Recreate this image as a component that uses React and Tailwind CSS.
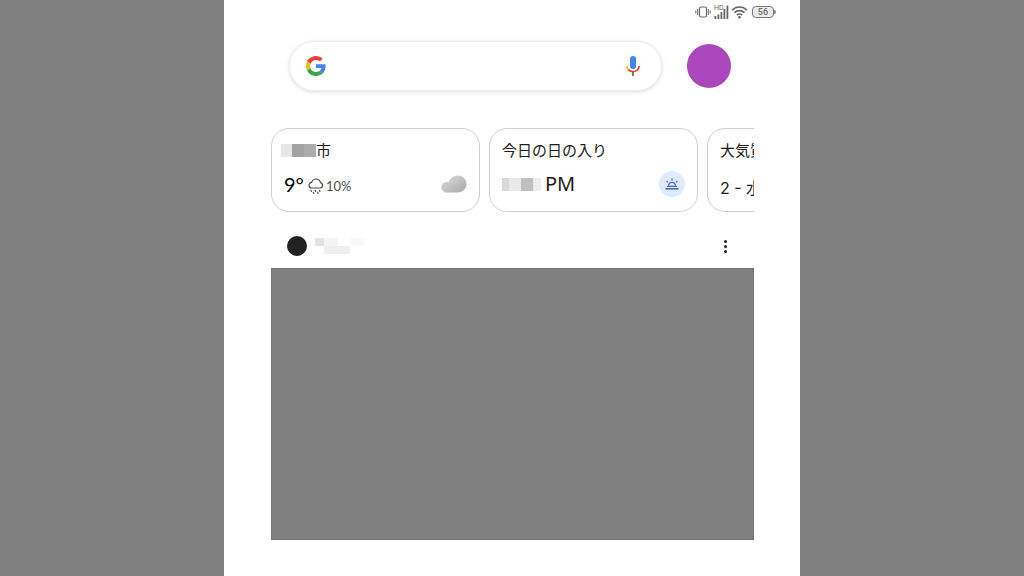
import React, { useState } from 'react';

function StatusBar() {
  return (
    <div className="flex h-6 items-center justify-end pr-6 text-[#666666]">
      <svg width="16" height="12" viewBox="0 0 16 12" fill="none" stroke="currentColor" aria-hidden="true">
        <rect x="4.5" y="1" width="7" height="10" rx="1.5" strokeWidth="1.2" />
        <path d="M2.7 3v6M0.8 4.5v3M13.3 3v6M15.2 4.5v3" strokeWidth="1" />
      </svg>
      <div className="relative mr-px ml-[3px] h-4 w-4">
        <span className="absolute top-0 left-0 font-['Roboto',sans-serif] text-[7px] leading-[8px]">HD</span>
        <svg className="absolute bottom-0 left-0" width="16" height="15" viewBox="0 0 16 15" fill="none" stroke="currentColor" strokeWidth="1.8" aria-hidden="true">
          <path d="M1.4 14v-3M4.4 14V9.5M7.4 14V7M10.4 14V4M13.4 14V0.5" />
        </svg>
      </div>
      <svg width="17" height="14" viewBox="0 0 17 14" fill="none" stroke="currentColor" strokeWidth="1.6" aria-hidden="true">
        <path d="M1 5.2C5.3 1 11.7 1 16 5.2M3.5 7.7c2.9-2.8 7.1-2.8 10 0M5.9 10.1c1.5-1.5 3.7-1.5 5.2 0" />
        <circle cx="8.5" cy="12.2" r="1.3" fill="currentColor" stroke="none" />
      </svg>
      <div className="ml-1 flex items-center">
        <span className="flex h-3 w-[22px] items-center justify-center rounded border border-[#777777] bg-[#eeeeee] font-['Roboto',sans-serif] text-[9px] leading-[10px] font-medium tracking-wide">
          56
        </span>
        <span className="h-1 w-0.5 rounded-r bg-[#888888]"></span>
      </div>
    </div>
  );
}

function GoogleLogo() {
  return (
    <svg className="shrink-0" width="20" height="20" viewBox="0 0 48 48" aria-hidden="true">
      <path fill="#EA4335" d="M24 9.5c3.54 0 6.71 1.22 9.21 3.6l6.85-6.85C35.9 2.38 30.47 0 24 0 14.62 0 6.51 5.38 2.56 13.22l7.98 6.19C12.43 13.72 17.74 9.5 24 9.5z" />
      <path fill="#4285F4" d="M46.98 24.55c0-1.57-.15-3.09-.38-4.55H24v9.02h12.94c-.58 2.96-2.26 5.48-4.78 7.18l7.73 6c4.51-4.18 7.09-10.36 7.09-17.65z" />
      <path fill="#FBBC05" d="M10.53 28.59c-.48-1.45-.76-2.99-.76-4.59s.27-3.14.76-4.59l-7.98-6.19C.92 16.46 0 20.12 0 24c0 3.88.92 7.54 2.56 10.78l7.97-6.19z" />
      <path fill="#34A853" d="M24 48c6.48 0 11.93-2.13 15.89-5.81l-7.73-6c-2.15 1.45-4.92 2.3-8.16 2.3-6.26 0-11.57-4.22-13.47-9.91l-7.98 6.19C6.51 42.62 14.62 48 24 48z" />
    </svg>
  );
}

function MicIcon() {
  return (
    <svg width="16" height="20" viewBox="0 0 16 20" fill="none" aria-hidden="true">
      <rect x="5" y="0" width="6" height="13" rx="3" fill="#4285F4" />
      <path d="M1.8 10c.2 1.7.9 3.1 2 4.1" stroke="#FBBC05" strokeWidth="1.8" />
      <path d="M3.4 13.7C4.6 15 6.2 15.6 8 15.6c3.3 0 5.9-2.3 6.2-5.6" stroke="#EA4335" strokeWidth="1.8" />
      <path d="M8 16v4" stroke="#34A853" strokeWidth="2" />
    </svg>
  );
}

function RainIcon() {
  return (
    <svg width="16" height="16" viewBox="0 0 16 16" fill="none" stroke="#4d4d4d" strokeWidth="1.2" strokeLinecap="round" aria-hidden="true">
      <path d="M4 10a2.8 2.8 0 0 1-.4-5.600C4.400 2.200 6 1 8 1c2.300 0 4 1.400 4.500 3.700a2.700 2.700 0 0 1-.3 5.300z" />
      <path d="M3 12.300l.5 1.200M7.200 12.300l.5 1.200M11.400 12.300l.5 1.200M5.400 14.200l.5 1.200M9.600 14.200l.5 1.200" />
    </svg>
  );
}

function CloudIcon() {
  return (
    <svg width="26" height="18" viewBox="0 0 26 18" aria-hidden="true">
      <defs>
        <linearGradient id="cloud" x1="0" y1="0" x2="1" y2="1">
          <stop offset="0" stopColor="#dddddd" />
          <stop offset="1" stopColor="#a8a8a8" />
        </linearGradient>
      </defs>
      <path fill="url(#cloud)" d="M5.5 17.500a5.200 5.200 0 0 1 0-10.400c.8 0 1.400.1 2 .3C8.600 3.300 12.500.5 17 .5a8.500 8.500 0 0 1 0 17z" />
    </svg>
  );
}

function SunsetIcon() {
  return (
    <svg width="14" height="12" viewBox="0 0 14 12" fill="none" stroke="#4468cf" strokeWidth="1.2" aria-hidden="true">
      <path d="M2 8.4h10M3.5 8c.2-2.3 1.6-3.6 3.5-3.6s3.3 1.3 3.5 3.6" />
      <path d="M0.5 10.8h13" strokeWidth="1.6" />
      <path d="M7 .5v2M1.5 3l1.3 1.3M12.5 3l-1.3 1.3" />
    </svg>
  );
}

function Card({ children }) {
  return (
    <article className="flex h-21 w-[209px] shrink-0 flex-col rounded-[18px] border border-[#cfcfcf] px-3 pt-[11px]">
      {children}
    </article>
  );
}

function App() {
  const [query, setQuery] = useState('');

  return (
    <div className="min-h-screen bg-[#808080] font-['Noto_Sans','Noto_Sans_CJK_JP',sans-serif] text-[#1c1c1c]">
      <div className="mx-auto min-h-screen max-w-xl bg-white">
        <StatusBar />

        <main className="pr-[46px] pb-9 pl-[47px]">
          <header className="flex items-center gap-[25px] pt-[17px] pr-[23px] pl-[18px]">
            <form
              role="search"
              onSubmit={(e) => e.preventDefault()}
              className="flex h-[50px] flex-1 items-center rounded-full border border-[#eeeeee] bg-white pr-5 pl-4 shadow-[0_1px_4px_rgba(0,0,0,0.14)]"
            >
              <GoogleLogo />
              <input
                type="search"
                name="q"
                aria-label="検索"
                value={query}
                onChange={(e) => setQuery(e.target.value)}
                className="mx-3 min-w-0 flex-1 bg-transparent text-base outline-none"
              />
              <button type="button" aria-label="音声検索">
                <MicIcon />
              </button>
            </form>
            <button type="button" aria-label="アカウント" className="size-11 rounded-full bg-[#ab47bc]"></button>
          </header>

          <section className="mt-[37px] flex gap-[9px] overflow-hidden">
            <Card>
              <h2 className="-ml-[3px] flex h-5 items-center text-[15px] leading-5">
                <span className="flex h-[13px]">
                  <span className="w-[11px] bg-[#e6e6e6]"></span>
                  <span className="w-3 bg-[#a2a2a2]"></span>
                  <span className="w-3 bg-[#acacac]"></span>
                </span>
                市
              </h2>
              <div className="mt-3 flex h-6 items-center">
                <span className="font-['Lato',sans-serif] text-xl leading-6 text-black">9°</span>
                <span className="ml-1 flex items-center gap-0.5 pt-1 font-['Lato',sans-serif] text-[13px] leading-5 text-[#4d4d4d]">
                  <RainIcon />
                  10%
                </span>
                <span className="ml-auto">
                  <CloudIcon />
                </span>
              </div>
            </Card>

            <Card>
              <h2 className="text-[15px] leading-5">今日の日の入り</h2>
              <div className="mt-3 flex h-6 items-center">
                <span className="flex h-[13px]">
                  <span className="w-[7px] bg-[#d9d9d9]"></span>
                  <span className="w-3 bg-[#e9e9e9]"></span>
                  <span className="w-3 bg-[#bfbfbf]"></span>
                  <span className="w-2 bg-[#ececec]"></span>
                </span>
                <span className="ml-1 text-xl leading-6">PM</span>
                <span className="ml-auto flex size-[26px] items-center justify-center rounded-full bg-[#e1eafc]">
                  <SunsetIcon />
                </span>
              </div>
            </Card>

            <Card>
              <h2 className="text-[15px] leading-5">大気質指数</h2>
              <p className="mt-4 font-['Inter','Noto_Sans_CJK_JP',sans-serif] text-base leading-6">2 - 水曜日</p>
            </Card>
          </section>

          <article>
            <div className="flex items-center pt-3 pr-6 pl-4">
              <span className="my-3 size-5 rounded-full bg-[#222222]"></span>
              <span className="ml-2 flex flex-col">
                <span className="flex h-2">
                  <span className="w-[9px] bg-[#e2e2e2]"></span>
                  <span className="w-[14px] bg-[#f4f4f4]"></span>
                  <span className="ml-3 w-[14px] bg-[#f9f9f9]"></span>
                </span>
                <span className="ml-[9px] h-2 w-[26px] bg-[#efefef]"></span>
              </span>
              <button type="button" aria-label="その他" className="ml-auto flex w-[9px] flex-col items-center gap-0.5">
                <span className="size-[3px] rounded-full bg-[#222222]"></span>
                <span className="size-[3px] rounded-full bg-[#222222]"></span>
                <span className="size-[3px] rounded-full bg-[#222222]"></span>
              </button>
            </div>
            <div className="aspect-video border border-[#747474] bg-[#808080]"></div>
          </article>
        </main>
      </div>
    </div>
  );
}

export default App;
